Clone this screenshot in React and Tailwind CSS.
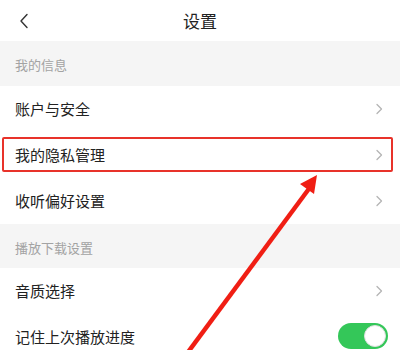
import React from "react";

const Chevron = () => (
  <svg width="8" height="12" viewBox="0 0 8 12" className="mr-[17px]">
    <path d="M2 1.5 L6.5 6 L2 10.5" fill="none" stroke="#b5b5b5" strokeWidth="1.3" strokeLinecap="round" strokeLinejoin="round" />
  </svg>
);

const Row = ({ label, right }) => (
  <div className="h-[46px] flex items-center justify-between bg-white pl-[15px]">
    <span className="text-[15px] text-[#222]">{label}</span>
    {right ?? <Chevron />}
  </div>
);

const Section = ({ label, h }) => (
  <div className={`${h} flex items-center bg-[#f5f5f5] pl-[15px] pt-[3px]`}>
    <span className="text-[13px] text-[#a3a3a3]">{label}</span>
  </div>
);

const Toggle = () => (
  <div className="mr-[12px] w-[50px] h-[26px] rounded-full bg-[#34c759] flex items-center justify-end pr-[2px] mt-[-2px]">
    <div className="w-[22px] h-[22px] rounded-full bg-white border border-[#e0e0e0]" />
  </div>
);

export default function App() {
  return (
    <div
      className="relative w-[400px] h-[350px] overflow-hidden bg-white"
      style={{ fontFamily: '"Noto Sans CJK SC", "Noto Sans", sans-serif' }}
    >
      <div className="h-[41px] relative flex items-center justify-center bg-white">
        <svg width="10" height="16" viewBox="0 0 10 16" className="absolute left-[19px] top-[13px]">
          <path d="M8 1.5 L2 8 L8 14.5" fill="none" stroke="#333" strokeWidth="1.4" strokeLinecap="round" strokeLinejoin="round" />
        </svg>
        <span className="text-[17px] text-[#222]">设置</span>
      </div>
      <Section label="我的信息" h="h-[45px]" />
      <Row label="账户与安全" />
      <Row label="我的隐私管理" />
      <Row label="收听偏好设置" />
      <Section label="播放下载设置" h="h-[44px]" />
      <Row label="音质选择" />
      <Row label="记住上次播放进度" right={<Toggle />} />

      <div className="absolute left-[2px] top-[137px] w-[391px] h-[35px] border-2 border-[#e8322a] rounded-[2px]" />

      <svg className="absolute left-0 top-0" width="400" height="350" viewBox="0 0 400 350">
        <line x1="160" y1="390" x2="311" y2="186" stroke="#f01e14" strokeWidth="4.5" strokeLinecap="butt" />
        <polygon points="317,175 300,184 314,194" fill="#f01e14" />
      </svg>
    </div>
  );
}
